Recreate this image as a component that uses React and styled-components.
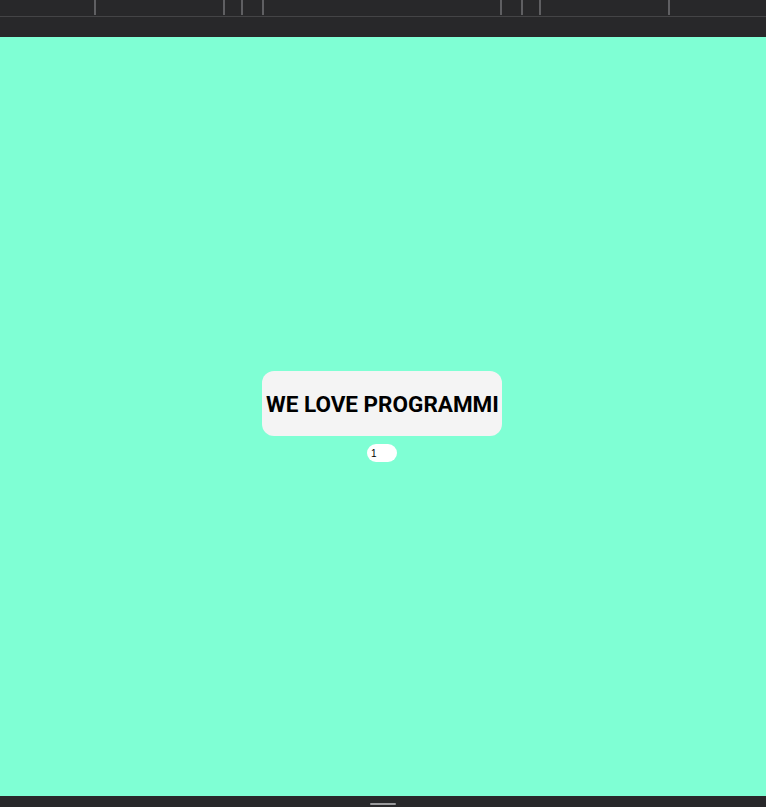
import React, { useState } from "react";
import styled, { createGlobalStyle } from "styled-components";

const GlobalStyle = createGlobalStyle`
  html, body, #root {
    margin: 0;
    height: 100%;
  }
  body {
    font-family: Roboto, "Liberation Sans", sans-serif;
    background: #28282a;
  }
`;

const Page = styled.div`
  display: flex;
  flex-direction: column;
  height: 100vh;
`;

const TopBar = styled.div`
  height: 37px;
  background: #28282a;
  display: flex;
  flex-direction: column;
`;

const Ruler = styled.div`
  height: 16px;
  display: flex;
  border-bottom: 1px solid #444446;
`;

const Tick = styled.div`
  width: ${(props) => props.w}px;
  height: 15px;
  border-right: 2px solid #5f5f62;
  flex-shrink: 0;
`;

const Stage = styled.main`
  flex: 1;
  background: #7fffd4;
  display: flex;
  flex-direction: column;
  align-items: center;
  justify-content: center;
  gap: 8px;
  padding-right: 2px;
`;

const Card = styled.div`
  width: 240px;
  height: 65px;
  box-sizing: border-box;
  padding: 0 4px;
  background: #f4f4f4;
  border-radius: 12px;
  display: flex;
  align-items: center;
  overflow: hidden;
`;

const Title = styled.h1`
  margin: 0;
  min-width: 0;
  font-size: 22.5px;
  font-weight: 700;
  color: #000;
  white-space: nowrap;
  overflow: hidden;
`;

const Counter = styled.input`
  width: 30px;
  height: 18px;
  box-sizing: border-box;
  border: none;
  outline: none;
  border-radius: 9px;
  background: #fff;
  padding: 0 4px;
  font-family: "Liberation Sans", Arial, sans-serif;
  font-size: 10px;
  color: #000;
`;

const BottomBar = styled.div`
  height: 11px;
  background: #28282a;
  display: flex;
  justify-content: center;
  align-items: flex-end;
`;

const Handle = styled.div`
  width: 26px;
  height: 2px;
  margin-bottom: 2px;
  background: #9a9a9c;
  border-radius: 1px;
`;

const ticks = [94, 127, 16, 19, 236, 19, 16, 127, 97];

export default function App() {
  const [count, setCount] = useState("1");

  return (
    <Page>
      <GlobalStyle />
      <TopBar>
        <Ruler>
          {ticks.map((w, i) => (
            <Tick key={i} w={w} />
          ))}
        </Ruler>
      </TopBar>
      <Stage>
        <Card>
          <Title>WE LOVE PROGRAMMI</Title>
        </Card>
        <Counter value={count} onChange={(e) => setCount(e.target.value)} />
      </Stage>
      <BottomBar>
        <Handle />
      </BottomBar>
    </Page>
  );
}
